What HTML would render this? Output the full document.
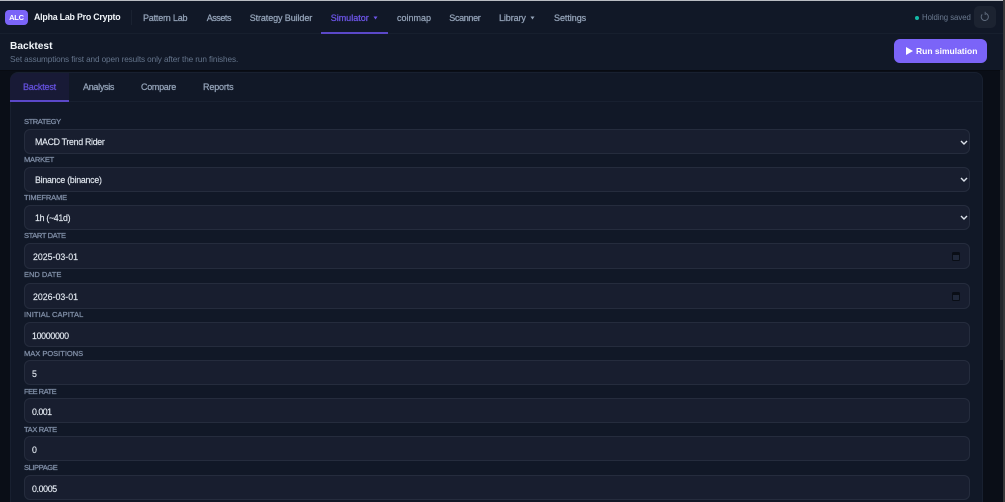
<!DOCTYPE html>
<html><head><meta charset="utf-8">
<style>
html,body{margin:0;padding:0;width:1005px;height:502px;overflow:hidden;background:#0a0e17;font-family:"Liberation Sans",sans-serif;color:#e2e8f0}
#w{position:absolute;left:0;top:0;width:1005px;height:502px;overflow:hidden}
.a{position:absolute;white-space:nowrap}
#top{position:absolute;left:0;top:0;width:1003px;height:1px;background:#b9bcc2}
#nav{position:absolute;left:0;top:1px;width:1003px;height:32px;background:#111827;border-bottom:1px solid #171f2e}
#head{position:absolute;left:0;top:34px;width:1003px;height:36px;background:#111827;border-bottom:1px solid #080b12}
#card{position:absolute;left:10px;top:72px;width:973px;height:430px;background:#111827;border:1px solid #182030;border-bottom:0;border-radius:8px 8px 0 0;box-sizing:border-box}
.n{font-size:9px;color:#94a3b8;top:13px;-webkit-text-stroke:.25px #94a3b8}
.l{position:absolute;left:24px;font-size:7.5px;color:#7d8ba3;-webkit-text-stroke:.3px #7d8ba3;white-space:nowrap}
.f{position:absolute;left:24px;width:946px;background:#181e2f;border:1px solid #252c3d;border-radius:6px;box-sizing:border-box}
.v{position:absolute;font-size:8.8px;color:#e2e8f0;white-space:nowrap;-webkit-text-stroke:.15px #e2e8f0}
.t{font-size:9px;color:#94a3b8;top:82px;-webkit-text-stroke:.25px #94a3b8}
</style></head><body><div id="w">
<div id="nav"></div><div id="top"></div>
<div id="head"></div>
<div class="a" style="left:1003px;top:0;width:2px;height:502px;background:#36373a"></div>
<div class="a" style="left:1000px;top:70px;width:3px;height:290px;background:#24272d"></div>

<div class="a" style="left:5px;top:10px;width:23px;height:15px;background:#7b64f8;border-radius:4px;color:#fff;font-size:7.5px;font-weight:700;text-align:center;line-height:15px;letter-spacing:-.2px">ALC</div>
<div class="a" style="left:34px;top:12px;font-size:8.8px;font-weight:700;color:#f1f5f9;letter-spacing:-.2px">Alpha Lab Pro Crypto</div>
<div class="a" style="left:131px;top:10px;width:1px;height:15px;background:#1a2231"></div>
<div class="a n" style="left:143px;letter-spacing:-.2px">Pattern Lab</div>
<div class="a n" style="left:206.7px;letter-spacing:-.45px">Assets</div>
<div class="a n" style="left:249.7px;letter-spacing:-.1px">Strategy Builder</div>
<div class="a n" style="left:330.7px;color:#6d55e8;-webkit-text-stroke:.25px #6d55e8">Simulator</div>
<svg class="a" style="left:372.5px;top:16px" width="5" height="4"><path d="M0.5 0.5H4.5L2.5 3.5Z" fill="#6d55e8"/></svg>
<div class="a" style="left:321px;top:32px;width:67px;height:2px;background:#5b48c8"></div>
<div class="a n" style="left:397px">coinmap</div>
<div class="a n" style="left:449.3px;letter-spacing:-.35px">Scanner</div>
<div class="a n" style="left:499px;letter-spacing:-.1px">Library</div>
<svg class="a" style="left:529.5px;top:16px" width="5" height="4"><path d="M0.5 0.5H4.5L2.5 3.5Z" fill="#94a3b8"/></svg>
<div class="a n" style="left:554px;letter-spacing:-.05px">Settings</div>

<div class="a" style="left:915px;top:15.5px;width:4px;height:4px;border-radius:50%;background:#14b8a6"></div>
<div class="a" style="left:922px;top:13px;font-size:7.8px;color:#6b7a90;letter-spacing:-.05px">Holding saved</div>
<div class="a" style="left:974px;top:6px;width:22px;height:22px;background:#1c2331;border-radius:5px"></div>
<svg class="a" style="left:979px;top:11px" width="12" height="12" viewBox="0 0 12 12" fill="none"><path d="M3.2 3.4A3.6 3.6 0 1 0 7 2.5" stroke="#5f6b7d" stroke-width="1"/><path d="M6.2 .8V4" stroke="#5f6b7d" stroke-width="1"/></svg>

<div class="a" style="left:10px;top:41px;font-size:10.2px;font-weight:700;color:#f1f5f9">Backtest</div>
<div class="a" style="left:10px;top:55px;font-size:8.2px;color:#64748b;letter-spacing:-.1px">Set assumptions first and open results only after the run finishes.</div>
<div class="a" style="left:894px;top:39px;width:93px;height:24px;background:#7b64f8;border-radius:6px"></div>
<svg class="a" style="left:905px;top:46px" width="9" height="10"><path d="M1 1L8 5L1 9Z" fill="#fff"/></svg>
<div class="a" style="left:916px;top:46px;font-size:8.5px;font-weight:700;color:#fff">Run simulation</div>

<div id="card"></div>
<div class="a" style="left:11px;top:101px;width:972px;height:1px;background:#182030"></div>
<div class="a" style="left:10px;top:73px;width:59px;height:27px;background:#181a36;border-radius:8px 0 0 0"></div>
<div class="a" style="left:10px;top:100px;width:59px;height:2px;background:#5b48c8"></div>
<div class="a t" style="left:23px;color:#6450dc;-webkit-text-stroke:.25px #6450dc;letter-spacing:-.2px">Backtest</div>
<div class="a t" style="left:83px;letter-spacing:-.3px">Analysis</div>
<div class="a t" style="left:141px;letter-spacing:-.3px">Compare</div>
<div class="a t" style="left:203px;letter-spacing:-.15px">Reports</div>

<div class="l" style="top:117px;letter-spacing:-.4px">STRATEGY</div>
<div class="f" style="top:129px;height:25px"></div><div class="v" style="left:35px;top:137px;letter-spacing:-.3px">MACD Trend Rider</div>
<div class="l" style="top:155px;letter-spacing:-.2px">MARKET</div>
<div class="f" style="top:167px;height:25px"></div><div class="v" style="left:35px;top:175px;letter-spacing:-.25px">Binance (binance)</div>
<div class="l" style="top:193px;letter-spacing:-.13px">TIMEFRAME</div>
<div class="f" style="top:205px;height:25px"></div><div class="v" style="left:35px;top:213px;letter-spacing:-.3px">1h (~41d)</div>
<svg class="a" style="left:960px;top:140px" width="8" height="5"><path d="M1 1L4 4L7 1" fill="none" stroke="#dbe1ea" stroke-width="1.4"/></svg>
<svg class="a" style="left:960px;top:177px" width="8" height="5"><path d="M1 1L4 4L7 1" fill="none" stroke="#dbe1ea" stroke-width="1.4"/></svg>
<svg class="a" style="left:960px;top:215px" width="8" height="5"><path d="M1 1L4 4L7 1" fill="none" stroke="#dbe1ea" stroke-width="1.4"/></svg>

<div class="l" style="top:231px;letter-spacing:-.37px">START DATE</div>
<div class="f" style="top:243px;height:26px"></div><div class="v" style="left:33px;top:252px">2025-03-01</div>
<div class="l" style="top:270px">END DATE</div>
<div class="f" style="top:283px;height:26px"></div><div class="v" style="left:33px;top:292px">2026-03-01</div>
<svg class="a" style="left:952px;top:252px" width="8" height="9"><rect x=".5" y=".5" width="7" height="8" rx="1" fill="#20283a" stroke="#0a0e16"/><rect x="1" y="1" width="6" height="2" fill="#0a0e16"/></svg>
<svg class="a" style="left:952px;top:292px" width="8" height="9"><rect x=".5" y=".5" width="7" height="8" rx="1" fill="#20283a" stroke="#0a0e16"/><rect x="1" y="1" width="6" height="2" fill="#0a0e16"/></svg>

<div class="l" style="top:310px;letter-spacing:.1px">INITIAL CAPITAL</div>
<div class="f" style="top:322px;height:25px"></div><div class="v" style="left:32px;top:331px;letter-spacing:-.3px">10000000</div>
<div class="l" style="top:349px">MAX POSITIONS</div>
<div class="f" style="top:360px;height:25px"></div><div class="v" style="left:32px;top:369px">5</div>
<div class="l" style="top:387px;letter-spacing:-.5px">FEE RATE</div>
<div class="f" style="top:398px;height:25px"></div><div class="v" style="left:32px;top:407px;letter-spacing:-.5px">0.001</div>
<div class="l" style="top:425px;letter-spacing:-.35px">TAX RATE</div>
<div class="f" style="top:436px;height:25px"></div><div class="v" style="left:32px;top:445px">0</div>
<div class="l" style="top:463px;letter-spacing:-.4px">SLIPPAGE</div>
<div class="f" style="top:475px;height:25px"></div><div class="v" style="left:32px;top:484px;letter-spacing:-.35px">0.0005</div>
</div></body></html>
